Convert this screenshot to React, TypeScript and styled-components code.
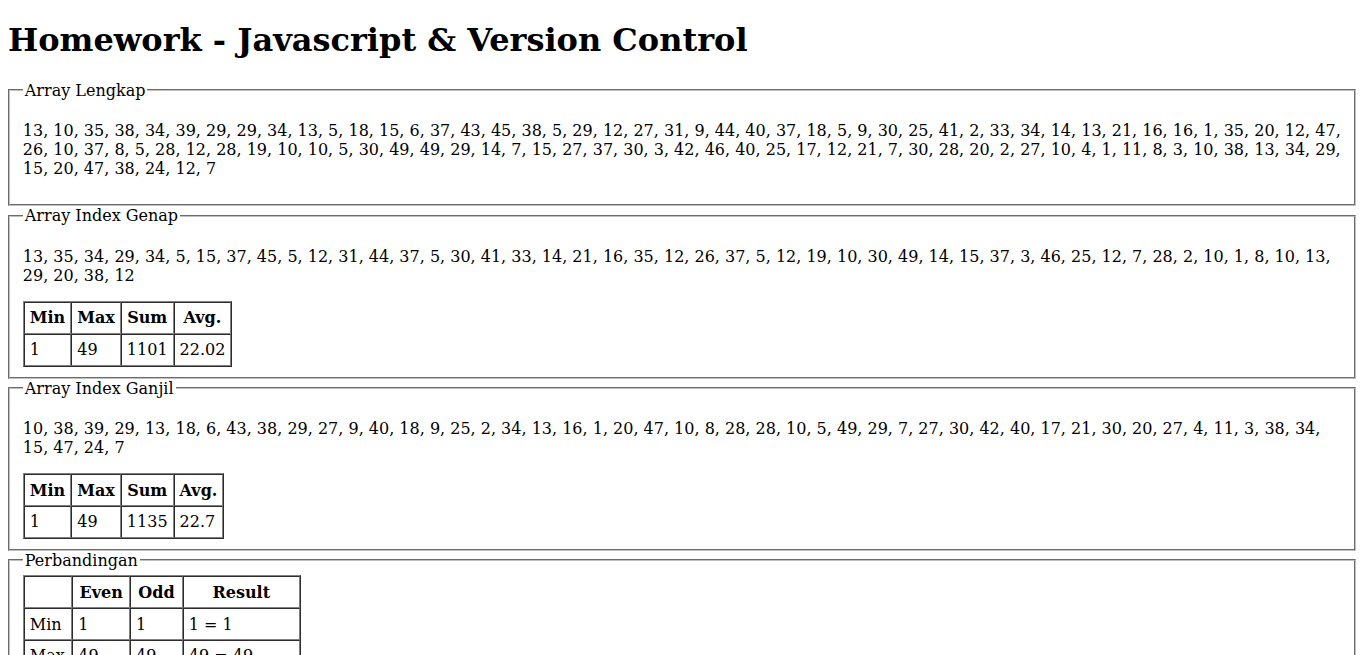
import React from "react";
import styled, { createGlobalStyle } from "styled-components";

const GlobalStyle = createGlobalStyle`
  body {
    margin: 0 8px 8px;
    font-family: "DejaVu Serif", serif;
    font-size: 16px;
    color: #000;
    background: #fff;
  }
`;

const Title = styled.h1`
  font-size: 2em;
  font-weight: bold;
  margin: 0.67em 0;
`;

const Group = styled.fieldset`
  margin: 0;
  padding: 0.35em 0.75em 0.625em 0.8em;
  border: 2px groove rgb(192, 192, 192);
`;

const Legend = styled.legend`
  padding: 0 2px;
`;

const Numbers = styled.p`
  margin: 1em 0;
`;

const StatTable = styled.table<{ $gap?: boolean }>`
  border-collapse: separate;
  border-spacing: 0;
  border: 1px outset #808080;
  margin-top: ${(p) => (p.$gap ? "3.5px" : "0")};
`;

const Th = styled.th`
  border: 1px inset #808080;
  padding: 5.4px 5px;
  font-weight: bold;
  text-align: center;
`;

const Td = styled.td`
  border: 1px inset #808080;
  padding: 5.4px 5px;
  text-align: left;
`;

const data = [
  13, 10, 35, 38, 34, 39, 29, 29, 34, 13, 5, 18, 15, 6, 37, 43, 45, 38, 5, 29,
  12, 27, 31, 9, 44, 40, 37, 18, 5, 9, 30, 25, 41, 2, 33, 34, 14, 13, 21, 16,
  16, 1, 35, 20, 12, 47, 26, 10, 37, 8, 5, 28, 12, 28, 19, 10, 10, 5, 30, 49,
  49, 29, 14, 7, 15, 27, 37, 30, 3, 42, 46, 40, 25, 17, 12, 21, 7, 30, 28, 20,
  2, 27, 10, 4, 1, 11, 8, 3, 10, 38, 13, 34, 29, 15, 20, 47, 38, 24, 12, 7,
];

type Stats = { min: number; max: number; sum: number; avg: number };

const stats = (arr: number[]): Stats => {
  const sum = arr.reduce((a, b) => a + b, 0);
  return {
    min: Math.min(...arr),
    max: Math.max(...arr),
    sum,
    avg: Math.round((sum / arr.length) * 100) / 100,
  };
};

const even = data.filter((_, i) => i % 2 === 0);
const odd = data.filter((_, i) => i % 2 === 1);
const evenStats = stats(even);
const oddStats = stats(odd);

const StatsTable: React.FC<{ s: Stats }> = ({ s }) => (
  <StatTable $gap>
    <tbody>
      <tr>
        <Th>Min</Th>
        <Th>Max</Th>
        <Th>Sum</Th>
        <Th>Avg.</Th>
      </tr>
      <tr>
        <Td>{s.min}</Td>
        <Td>{s.max}</Td>
        <Td>{s.sum}</Td>
        <Td>{s.avg}</Td>
      </tr>
    </tbody>
  </StatTable>
);

const compare = (a: number, b: number) =>
  `${a} ${a === b ? "=" : a < b ? "<" : ">"} ${b}`;

const rows: { label: string; key: keyof Stats }[] = [
  { label: "Min", key: "min" },
  { label: "Max", key: "max" },
  { label: "Sum", key: "sum" },
  { label: "Avg.", key: "avg" },
];

export default function App() {
  return (
    <>
      <GlobalStyle />
      <Title>Homework - Javascript &amp; Version Control</Title>
      <Group>
        <Legend>Array Lengkap</Legend>
        <Numbers>{data.join(", ")}</Numbers>
      </Group>
      <Group>
        <Legend>Array Index Genap</Legend>
        <Numbers>{even.join(", ")}</Numbers>
        <StatsTable s={evenStats} />
      </Group>
      <Group>
        <Legend>Array Index Ganjil</Legend>
        <Numbers>{odd.join(", ")}</Numbers>
        <StatsTable s={oddStats} />
      </Group>
      <Group>
        <Legend>Perbandingan</Legend>
        <StatTable>
          <tbody>
            <tr>
              <Th></Th>
              <Th>Even</Th>
              <Th>Odd</Th>
              <Th>Result</Th>
            </tr>
            {rows.map((r) => (
              <tr key={r.key}>
                <Td>{r.label}</Td>
                <Td>{evenStats[r.key]}</Td>
                <Td>{oddStats[r.key]}</Td>
                <Td>{compare(evenStats[r.key], oddStats[r.key])}</Td>
              </tr>
            ))}
          </tbody>
        </StatTable>
      </Group>
    </>
  );
}
